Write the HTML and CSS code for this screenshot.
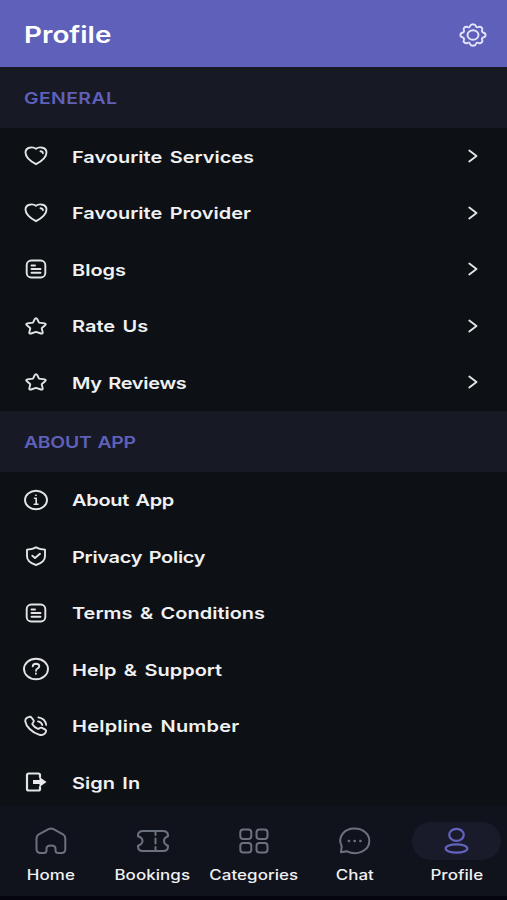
FILE: index.html
```html
<!DOCTYPE html>
<html lang="en">
<head>
<meta charset="utf-8">
<title>Profile</title>
<link rel="stylesheet" href="styles.css">
</head>
<body>
<svg class="defs" width="0" height="0">
  <symbol id="heart" viewBox="0 0 28 24"><path d="M14 20.200C11 18.600 3.500 14 3.500 8.500C3.500 3.500 10.500 2 14 4.800C17.500 2 24.500 3.500 24.500 8.500C24.500 14 17 18.600 14 20.200Z"/><path d="M18.500 7.300Q20.600 7.300 20.900 9.200"/></symbol>
  <symbol id="doc" viewBox="0 0 28 24"><rect x="4.700" y="3.500" width="18.600" height="17" rx="4.500"/><path d="M9.500 8.500h3.500M9.500 12h9M9.500 15.700h9"/></symbol>
  <symbol id="star" viewBox="0 0 28 24"><path d="M14 4.200Q14.800 4.200 15.300 5.200L17 8.600L22.700 9.400Q24.400 9.800 23.300 11L19.700 14.200L20.700 18.400Q20.700 20.100 19 19.500L14 17.900L9 19.500Q7.300 20.100 7.300 18.400L8.300 14.200L4.700 11Q3.600 9.800 5.300 9.400L11 8.600L12.700 5.200Q13.200 4.200 14 4.200Z"/></symbol>
  <symbol id="chev" viewBox="0 0 12 14"><path d="M2.300 1.500L9.500 7L2.300 12.500"/></symbol>
</svg>
<div class="screen">
  <header class="top">
    <h1><span>Profile</span></h1>
    <svg class="gear" viewBox="0 0 28 24"><ellipse cx="14" cy="12" rx="5.500" ry="4.800"/><path d="M11 3.200C12 .6 16 .6 17 3.200C17.500 4.600 18.500 4.500 19.500 4C22 3.300 24 5 23.200 7.200C22.700 8.200 22.800 9 24.200 9.500C27.400 10.400 27.400 13.600 24.200 14.500C22.800 15 22.700 15.800 23.200 16.800C24 19 22 20.700 19.500 20C18.500 19.500 17.500 19.400 17 20.800C16 23.400 12 23.400 11 20.800C10.500 19.400 9.500 19.500 8.500 20C6 20.700 4 19 4.800 16.800C5.300 15.800 5.200 15 3.800 14.500C.6 13.600 .6 10.400 3.800 9.500C5.200 9 5.300 8.200 4.800 7.200C4 5 6 3.300 8.500 4C9.500 4.500 10.500 4.600 11 3.200Z"/></svg>
  </header>
  <main>
    <h2><span>GENERAL</span></h2>
    <ul>
      <li><svg class="ic"><use href="#heart"/></svg><span class="label">Favourite Services</span><svg class="chev"><use href="#chev"/></svg></li>
      <li><svg class="ic"><use href="#heart"/></svg><span class="label">Favourite Provider</span><svg class="chev"><use href="#chev"/></svg></li>
      <li><svg class="ic"><use href="#doc"/></svg><span class="label">Blogs</span><svg class="chev"><use href="#chev"/></svg></li>
      <li><svg class="ic"><use href="#star"/></svg><span class="label">Rate Us</span><svg class="chev"><use href="#chev"/></svg></li>
      <li><svg class="ic"><use href="#star"/></svg><span class="label snug">My Reviews</span><svg class="chev"><use href="#chev"/></svg></li>
    </ul>
    <h2 class="tight"><span>ABOUT APP</span></h2>
    <ul>
      <li><svg class="ic" viewBox="0 0 28 24"><ellipse cx="14" cy="12" rx="11" ry="9.300"/><path d="M12.500 10.300H14.200V16.300M12.300 16.300h3.700M13.700 7.300h.4" stroke-width="1.600"/></svg><span class="label snug">About App</span></li>
      <li><svg class="ic" viewBox="0 0 28 24"><path d="M14 3.200C17 5.200 20 5.400 23 5.600V12.300C23 16.500 19 19.500 14 21C9 19.500 5 16.500 5 12.300V5.600C8 5.400 11 5.200 14 3.200Z"/><path d="M10.300 11.700L13 14L18 9.800"/></svg><span class="label snug">Privacy Policy</span></li>
      <li><svg class="ic"><use href="#doc"/></svg><span class="label">Terms &amp; Conditions</span></li>
      <li><svg class="ic" viewBox="0 0 28 24"><ellipse cx="14" cy="12" rx="12" ry="10.300"/><path d="M10.700 9.300Q11 6.800 14 6.800Q17.300 6.900 17.300 9.300Q17.300 10.800 15.500 11.500Q14 12.200 14 13.800M13.900 16.500v.2"/></svg><span class="label">Help &amp; Support</span></li>
      <li><svg class="ic" viewBox="0 0 28 24"><path d="M5.200 3.600L7.500 2.800Q8.800 2.600 9.700 3.800L11.700 6.500Q12.200 7.500 11.200 8.400Q9.800 9.500 10.500 10.600Q12.200 13.200 15.500 14.600Q16.700 15 17.900 14Q19 13.300 20 13.800L23.300 15.600Q24.500 16.600 24 17.700L22.700 19.700Q21 21.500 17.500 20.800C9.500 18.500 4 12.200 3.200 7.100Q3.100 4.700 5.200 3.600Z"/><path d="M16 7.300Q19.500 7.800 20.300 11M16.300 3.300Q23.200 4.300 24.200 10.800" stroke-width="1.800"/></svg><span class="label wide">Helpline Number</span></li>
      <li><svg class="ic" viewBox="0 0 28 24"><path d="M18 7V5Q18 3.500 16.300 3.500H6.800Q5 3.500 5 5V19Q5 20.500 6.800 20.500H16.300Q18 20.500 18 19V17" stroke-width="2.200"/><path class="solid" d="M11 10.100H17.500V7L24.500 12L17.500 17V13.900H11Z"/></svg><span class="label">Sign In</span></li>
    </ul>
  </main>
  <nav>
    <a><svg viewBox="0 0 34 30"><path d="M3 12.500Q3 10 5.300 8.300L15 3.200Q17.500 2 20 3.200L29.500 8.300Q31.800 10 31.800 12.500V23Q31.800 27 28 27H25Q22 27 22 24.500V22.500Q22 19.500 17.500 19.500Q13 19.500 13 22.500V24.500Q13 27 10.300 27H7.300Q3 27 3 23Z"/></svg><span>Home</span></a>
    <a><svg viewBox="0 0 34 30"><path d="M7.500 5H27.500Q32.500 5 32.500 9.500V10.300Q28.500 11.800 28.500 15Q28.500 18.200 32.500 19.700V20.500Q32.500 25 27.500 25H7.500Q2.500 25 2.500 20.500V19.700Q7 18.200 7 15Q7 11.800 2.500 10.300V9.500Q2.500 5 7.500 5ZM20 5.500V9M20 12.500V17.500M20 21V24.500"/></svg><span>Bookings</span></a>
    <a><svg viewBox="0 0 34 30"><rect x="3.800" y="3.500" width="11" height="9.500" rx="3"/><rect x="20" y="3.500" width="11" height="9.500" rx="3"/><rect x="3.800" y="17" width="11" height="9.500" rx="3"/><rect x="20" y="17" width="11" height="9.500" rx="3"/></svg><span>Categories</span></a>
    <a><svg viewBox="0 0 34 30"><path d="M3.500 26.200L4.200 20.300C-.5 10.500 7 2.600 17 2.600C26 2.600 31.800 8.300 31.800 15C31.800 24.700 19.500 30 9.500 25.300Z"/><path d="M11.300 15h.3M17 15h.3M22.800 15h.3" stroke-width="2.400"/></svg><span>Chat</span></a>
    <a class="active"><svg viewBox="0 0 34 30"><ellipse cx="17" cy="8.800" rx="7.300" ry="6"/><ellipse cx="17" cy="22.500" rx="10.800" ry="4.200"/></svg><span>Profile</span></a>
  </nav>
</div>
</body>
</html>
```

FILE: styles.css
```css
* { box-sizing: border-box; margin: 0; padding: 0; }
body { background: #05070d; font-family: Inter, "Liberation Sans", sans-serif; color: #f0f1f2; }
svg { fill: none; stroke: #e2e4e6; stroke-width: 1.9; stroke-linecap: round; stroke-linejoin: round; flex: none; display: block; }
.defs { display: none; }
.screen { height: 900px; display: flex; flex-direction: column; overflow: hidden; background: #0d1014; }
.top { height: 67px; flex: none; background: #5f60b9; display: flex; align-items: center; justify-content: space-between; padding: 2px 20px 0 24px; }
h1 { font-size: 23px; font-weight: 600; color: #fff; }
h1 span, h2 span, .label { display: inline-block; transform: scaleX(1.21); transform-origin: left; white-space: nowrap; }
.gear { width: 28px; height: 24px; stroke: #e3e4fa; stroke-width: 1.9; }
main { flex: 1; min-height: 0; overflow: hidden; }
h2 { height: 61px; display: flex; align-items: center; padding: 1px 0 0 24px; background: #171925; color: #5f60b9; font-size: 16px; font-weight: 600; letter-spacing: .35px; }
h2.tight { letter-spacing: -.2px; word-spacing: 1px; }
ul { list-style: none; }
li { height: 56.500px; display: flex; align-items: center; padding: 0 28px 0 22px; }
.ic { width: 28px; height: 24px; margin-right: 21.500px; }
.solid { fill: #e8eaec; stroke: none; }
.label { font-size: 16.500px; font-weight: 600; flex: 1; letter-spacing: 0; word-spacing: 2px; line-height: 22px; padding-top: 1px; }
.label.snug { letter-spacing: -.25px; word-spacing: 1.500px; }
.label.wide { letter-spacing: .2px; }
.chev { width: 12px; height: 14px; }
nav { height: 94px; flex: none; display: flex; background: #10131b; border-bottom: 4px solid #05060d; padding: 16px 0 0; }
nav a { flex: 1; display: flex; flex-direction: column; align-items: center; }
nav svg { width: 89px; height: 38px; padding: 4px 0; border-radius: 19px; stroke: #6c727d; stroke-width: 2; }
nav span { font-size: 14px; font-weight: 500; line-height: 18px; margin-top: 6px; letter-spacing: .05px; transform: scaleX(1.21); }
nav .active svg { background: #191b2b; stroke: #6263bd; stroke-width: 2.200; }
```
